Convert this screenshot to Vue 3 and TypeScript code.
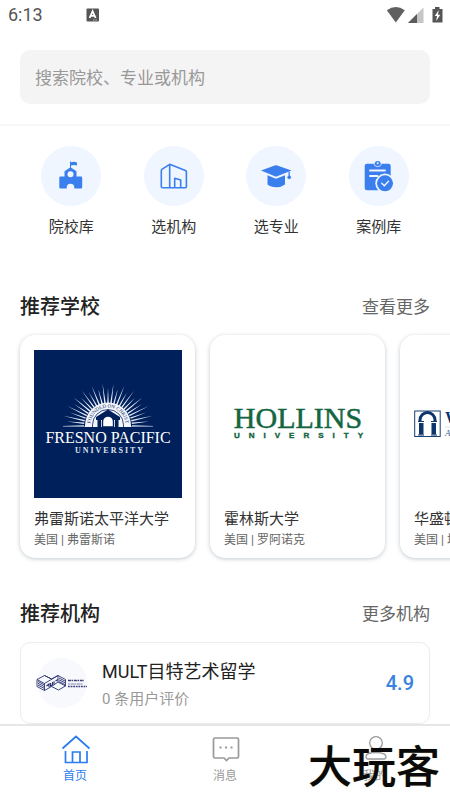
<script setup lang="ts">
import { ref } from 'vue'

interface Shortcut {
  icon: 'school' | 'agency' | 'major' | 'case'
  label: string
}

interface School {
  logo: 'fresno' | 'hollins' | 'washington'
  name: string
  place: string
}

interface Tab {
  id: 'home' | 'message' | 'mine'
  label: string
}

const keyword = ref('')
const activeTab = ref<Tab['id']>('home')

const shortcuts: Shortcut[] = [
  { icon: 'school', label: '院校库' },
  { icon: 'agency', label: '选机构' },
  { icon: 'major', label: '选专业' },
  { icon: 'case', label: '案例库' },
]

const schools: School[] = [
  { logo: 'fresno', name: '弗雷斯诺太平洋大学', place: '美国 | 弗雷斯诺' },
  { logo: 'hollins', name: '霍林斯大学', place: '美国 | 罗阿诺克' },
  { logo: 'washington', name: '华盛顿复临大学', place: '美国 | 塔科马' },
]

const tabs: Tab[] = [
  { id: 'home', label: '首页' },
  { id: 'message', label: '消息' },
  { id: 'mine', label: '我的' },
]

// Sunburst around the Fresno arch: alternating long and short rays.
const rays = Array.from({ length: 27 }, (_, i) => {
  const angle = Math.PI + (Math.PI * i) / 26
  const half = 0.034
  const outer = i % 2 === 0 ? 46 : 41
  const at = (r: number, a: number) =>
    `${(74 + r * Math.cos(a)).toFixed(1)},${(76 + r * 0.93 * Math.sin(a)).toFixed(1)}`
  return `${at(24, angle - half)} ${at(outer, angle)} ${at(24, angle + half)}`
})
</script>

<template>
  <div class="app">
    <header class="status">
      <span class="clock">6:13</span>
      <svg class="ime" viewBox="0 0 14 14" aria-hidden="true">
        <rect x="0.5" y="0.5" width="12.5" height="13" rx="1" fill="#555" />
        <path d="M3.6 10 6.6 3.2 9.6 10M4.8 7.8h3.6" fill="none" stroke="#fff" stroke-width="1.8" />
        <path d="M7 12h4" stroke="#ddd" stroke-width="0.8" stroke-dasharray="1 .6" />
      </svg>
      <svg class="signals" viewBox="0 0 58 18" aria-hidden="true">
        <path d="M0.8 4.2Q9.8-2.2 18.8 4.2L9.8 16.5Z" fill="#606060" />
        <path d="M22 17 37.500 1.500V17Z" fill="#c6c6c6" />
        <path d="M22 17 31 8V17Z" fill="#5b5b5b" />
        <path d="M46.500 3h2.500V1h4.500v2H56.500V16.500H46.500Z" fill="#555" />
        <path d="M52.800 4 48.800 10h2.200L50.200 15 54.300 8.800h-2.400Z" fill="#fff" />
      </svg>
    </header>

    <main class="content">
      <form class="search" role="search" @submit.prevent>
        <input v-model="keyword" type="search" aria-label="搜索" placeholder="搜索院校、专业或机构" />
      </form>

      <nav class="shortcuts">
        <a v-for="item in shortcuts" :key="item.icon" class="shortcut" href="#">
          <svg class="shortcut-icon" viewBox="0 0 60 60" aria-hidden="true">
            <g v-if="item.icon === 'school'" fill="#3b7fee">
              <path d="M29 15.500H30V16.200Q33 15.300 36 16.500V19.600Q33 18.500 30 19.600V22.300H29Z" />
              <path
                fill-rule="evenodd"
                d="M29.500 21.300 35.500 25.200V30.500H40Q41.200 30.500 41.200 31.700V41.300Q41.200 42.500 40 42.500H33.300V41.500A3.800 3.800 0 0 0 25.700 41.500V42.500H19.500Q18.300 42.500 18.300 41.300V31.700Q18.300 30.500 19.500 30.500H23.500V25.200ZM29.500 25.300A3 3 0 1 0 29.500 31.300A3 3 0 1 0 29.500 25.300Z"
              />
            </g>
            <g v-else-if="item.icon === 'agency'" fill="none" stroke="#3b7fee" stroke-width="1.600" stroke-linejoin="round">
              <path d="M25.700 18.300 18.200 23.200Q17.300 23.900 17.300 25V40.500Q17.300 41.700 18.500 41.700H41.200Q42.400 41.700 42.400 40.500V26Q42.400 24.900 41.400 24.500Z" />
              <path d="M25.700 18.300V41.700M30.700 41.700V32.300L36.700 34V41.700" />
            </g>
            <g v-else-if="item.icon === 'major'" fill="#3b7fee">
              <path d="M15 24.600 28.800 19.400Q30 19 31.200 19.400L45.500 24.600 31.200 30.300Q30 30.800 28.800 30.300Z" />
              <path d="M21.500 29.300 28.600 32.200Q30 32.800 31.400 32.200L39 29.200V38.500Q35.500 41.300 30.200 41.300T21.500 38.500Z" />
              <path d="M42.500 25.500H43.800V29.500Q45.500 30.500 45.200 32L43.200 33.200 41.200 32Q41 30.500 42.500 29.500Z" />
            </g>
            <g v-else>
              <rect x="15.700" y="17.700" width="26" height="26.500" rx="2.200" fill="#3b7fee" />
              <circle cx="28.700" cy="18" r="3" fill="#3b7fee" />
              <path d="M24.500 17.300Q25.500 20.700 28.700 20.700T32.900 17.300" fill="none" stroke="#eff6ff" stroke-width="0.800" />
              <circle cx="28.700" cy="17.200" r="1" fill="#eff6ff" />
              <path d="M21 24.500H36M21 30H28.500" stroke="#eff6ff" stroke-width="1.900" stroke-linecap="round" />
              <circle cx="36" cy="37.300" r="9.700" fill="#eff6ff" />
              <circle cx="36" cy="37.300" r="8" fill="#3b7fee" />
              <path d="M32.800 37.300 35.300 39.700 39.500 35.200" fill="none" stroke="#eff6ff" stroke-width="1.400" stroke-linecap="round" />
            </g>
          </svg>
          <span>{{ item.label }}</span>
        </a>
      </nav>

      <section class="section">
        <div class="section-head">
          <h2>推荐学校</h2>
          <a href="#">查看更多</a>
        </div>
        <div class="schools">
          <a v-for="school in schools" :key="school.logo" class="school" href="#">
            <svg v-if="school.logo === 'fresno'" class="school-logo" viewBox="0 0 148 148" role="img" aria-label="Fresno Pacific University">
              <rect width="148" height="148" fill="#00205b" />
              <polygon v-for="points in rays" :key="points" :points="points" fill="#e7edf8" />
              <path d="M29 76.500H119" stroke="#8295ba" stroke-width="0.800" />
              <path d="M51 77V75.500A23 23 0 0 1 97 75.500V77Z" fill="#f4f6fb" />
              <path d="M58.500 77V75A15.500 15.500 0 0 1 89.500 75V77" fill="none" stroke="#00205b" stroke-width="0.800" />
              <path id="fresno-arc" d="M56.500 77V75A17.500 17.500 0 0 1 91.500 75V77" fill="none" />
              <text class="fresno-motto"><textPath href="#fresno-arc" startOffset="50%">FOUNDED ON CHRIST</textPath></text>
              <path d="M62 67 74 59.500 86 67V70H62ZM63.500 70H67V77H63.500ZM81 70H84.500V77H81Z" fill="#00205b" />
              <path d="M68.500 77V71.500A5.500 5.500 0 0 1 79.500 71.500V77Z" fill="#fff" stroke="#00205b" stroke-width="1.400" />
              <text class="fresno-name" x="74" y="93">FRESNO PACIFIC</text>
              <text class="fresno-sub" x="76" y="103">UNIVERSITY</text>
            </svg>
            <svg v-else-if="school.logo === 'hollins'" class="school-logo" viewBox="0 0 148 148" role="img" aria-label="Hollins University">
              <text class="hollins-name" x="74" y="78">HOLLINS</text>
              <text class="hollins-sub" x="79" y="88">UNIVERSITY</text>
            </svg>
            <svg v-else class="school-logo" viewBox="0 0 148 148" role="img" aria-label="Washington Adventist University">
              <rect x="0.700" y="61" width="25.500" height="25.500" fill="#fff" stroke="#173e73" stroke-width="1" />
              <path d="M6 71.500V70A7.500 7.500 0 0 1 21 70V71.500" fill="none" stroke="#0c356c" stroke-width="3" />
              <path d="M4 71.500H10M17 71.500H23M4 85H10M17 85H23" stroke="#0c356c" stroke-width="1.200" />
              <path d="M5 73H9.500V84.500H5ZM17.500 73H22V84.500H17.500Z" fill="#0c356c" />
              <text class="wau-name" x="31" y="73">WASHINGTON</text>
              <path d="M31 77H140" stroke="#c4cedb" stroke-width="0.600" />
              <text class="wau-sub" x="31" y="86">Adventist University</text>
            </svg>
            <strong>{{ school.name }}</strong>
            <small>{{ school.place }}</small>
          </a>
        </div>
      </section>

      <section class="section">
        <div class="section-head">
          <h2>推荐机构</h2>
          <a href="#">更多机构</a>
        </div>
        <a class="agency" href="#">
          <svg class="agency-logo" viewBox="0 0 52 50" role="img" aria-label="MULT">
            <circle cx="26" cy="25" r="25" fill="#f7f9fd" />
            <g fill="none" stroke="#29316f" stroke-width="0.900" stroke-linejoin="round">
              <path d="M1 21.500 8.500 17.500 15.500 21 22 17.500 29.500 21.500V28L22.500 32 15.500 28.500 8.500 32.500 1 28.500Z" />
              <path d="M1 21.500 8.500 25.500 22 17.500M8.500 25.500V32.500M22 17.500V24L29.500 28M15.500 28.500 22 24M15.500 21 8.500 17.500" />
              <path d="M2 23.500 8 26.700M2 25.300 8 28.500M2 27.100 8 30.300M23 20 29 23M23 21.800 29 24.800M23 23.600 29 26.600" />
            </g>
            <path d="M10.500 28 13 26V29M14.500 25V28L16.500 26.800V24M18 23.300V26.500M19.500 23 22 21.500" fill="none" stroke="#29316f" stroke-width="1.100" />
            <path d="M32 22.500H48" stroke="#39417c" stroke-width="1.700" stroke-dasharray="3 .6 1.500 .8" />
            <path d="M32 26H47" stroke="#737aa3" stroke-width="1.200" stroke-dasharray="2 .7 3 .5" />
            <path d="M32 28.500H51" stroke="#39417c" stroke-width="1.300" stroke-dasharray="1.800 .8" />
          </svg>
          <span class="agency-text">
            <strong>MULT目特艺术留学</strong>
            <small>0 条用户评价</small>
          </span>
          <span class="score">4.9</span>
        </a>
      </section>
    </main>

    <footer class="tabbar">
      <button
        v-for="tab in tabs"
        :key="tab.id"
        type="button"
        class="tab"
        :class="{ active: tab.id === activeTab }"
        @click="activeTab = tab.id"
      >
        <svg viewBox="0 0 30 30" fill="none" stroke="currentColor" stroke-width="1.700" aria-hidden="true">
          <g v-if="tab.id === 'home'">
            <path d="M2.500 14.500 16 2.500 29.500 14.500" />
            <path d="M5.500 17V28.500H27V17M12.500 28.500V18H20V28.500" />
          </g>
          <g v-else-if="tab.id === 'message'">
            <path d="M5 4H27Q28.500 4 28.500 5.500V22.500Q28.500 24 27 24H19L16.500 26.500 14 24H5Q3.500 24 3.500 22.500V5.500Q3.500 4 5 4Z" />
            <path d="M9.500 13.500H11.500M15 13.500H17M20.500 13.500H22.500" stroke-width="2" />
          </g>
          <g v-else stroke-width="1.300">
            <circle cx="16" cy="9" r="6.300" />
            <path d="M16 18.500C24 18.500 26 21 26 22.500Q26 25 24 25H8Q6 25 6 22.500C6 21 8 18.500 16 18.500Z" />
          </g>
        </svg>
        <span>{{ tab.label }}</span>
      </button>
      <span class="watermark">大玩客</span>
    </footer>
  </div>
</template>

<style>
body {
  margin: 0;
  background: #fff;
}
</style>

<style scoped>
.app {
  display: flex;
  flex-direction: column;
  height: 100vh;
  overflow: hidden;
  color: #333;
  font-family: Roboto, 'Noto Sans CJK SC', sans-serif;
}

.app * {
  box-sizing: border-box;
}

a {
  color: inherit;
  text-decoration: none;
}

.status {
  display: flex;
  flex: none;
  align-items: center;
  height: 30px;
  padding: 0 6px 0 8px;
}

.clock {
  width: 78px;
  color: #555;
  font-size: 18px;
  line-height: 30px;
}

.ime {
  width: 14px;
  height: 14px;
}

.signals {
  width: 58px;
  height: 18px;
  margin-left: auto;
}

.content {
  flex: 1;
  min-height: 0;
  overflow-y: auto;
  scrollbar-width: none;
}

.search {
  padding: 20px;
  border-bottom: 2px solid #f5f7f9;
}

.search input {
  display: block;
  width: 100%;
  height: 54px;
  padding: 2px 15px 0;
  border: 0;
  border-radius: 10px;
  outline: 0;
  background: #f4f4f4;
  color: #333;
  font-family: inherit;
  font-size: 17px;
  appearance: none;
}

.search input::placeholder {
  color: #999;
  opacity: 1;
}

.shortcuts {
  display: grid;
  grid-template-columns: repeat(4, 1fr);
  padding: 20px 20px 0;
}

.shortcut {
  display: flex;
  flex-direction: column;
  align-items: center;
  gap: 10px;
  font-size: 15px;
  line-height: 22px;
}

.shortcut-icon {
  width: 60px;
  height: 60px;
  border-radius: 50%;
  background: #eff6ff;
}

.section {
  padding: 0 20px;
}

.shortcuts + .section {
  padding-top: 54px;
}

.schools {
  display: flex;
  gap: 15px;
  margin: 0 -20px;
  padding: 13px 20px 41px;
  overflow-x: auto;
  scrollbar-width: none;
}

.section-head {
  display: flex;
  align-items: center;
  justify-content: space-between;
  line-height: 30px;
}

.section-head h2 {
  margin: 0;
  color: #222;
  font-size: 20px;
  font-weight: 500;
}

.section-head a {
  color: #666;
  font-size: 17px;
}

.school {
  display: flex;
  flex: none;
  flex-direction: column;
  width: 175px;
  padding: 15px 13px 8px 14px;
  border-radius: 15px;
  background: #fff;
  box-shadow: 0 1px 4px rgba(40, 60, 80, 0.28);
}

.school-logo {
  width: 148px;
  height: 148px;
}

.school strong {
  margin-top: 10px;
  overflow: hidden;
  font-size: 15px;
  font-weight: 400;
  line-height: 22px;
  white-space: nowrap;
}

.school small {
  color: #666;
  font-size: 12px;
  line-height: 20px;
}

.fresno-name {
  fill: #fff;
  font: 16px 'Liberation Serif', serif;
  text-anchor: middle;
}

.fresno-sub {
  fill: #dce3f0;
  font: bold 8px 'Liberation Serif', serif;
  letter-spacing: 2px;
  text-anchor: middle;
}

.fresno-motto {
  fill: #00205b;
  font: 5px 'Liberation Serif', serif;
  text-anchor: middle;
}

.hollins-name {
  fill: #13663f;
  stroke: #13663f;
  stroke-width: 0.5px;
  font: 30px 'Liberation Serif', serif;
  text-anchor: middle;
}

.hollins-sub {
  fill: #13663f;
  stroke: #13663f;
  stroke-width: 0.4px;
  font: bold 8px 'Liberation Sans', sans-serif;
  letter-spacing: 9px;
  text-anchor: middle;
}

.wau-name {
  fill: #0c356c;
  font: bold 16px 'Liberation Serif', serif;
}

.wau-sub {
  fill: #45618a;
  font: italic 9px 'Liberation Serif', serif;
}

.agency {
  display: flex;
  align-items: center;
  height: 82px;
  margin-top: 13px;
  padding: 0 15px;
  border: 1px solid #ececec;
  border-radius: 10px;
}

.agency-logo {
  width: 52px;
  height: 50px;
}

.agency-text {
  display: flex;
  flex: 1;
  flex-direction: column;
  padding: 4px 0 0 14px;
}

.agency-text strong {
  color: #222;
  font-size: 18px;
  font-weight: 400;
  line-height: 28px;
}

.agency-text small {
  color: #999;
  font-size: 15px;
  line-height: 26px;
}

.score {
  color: #3a82dc;
  font-size: 20px;
  font-weight: 500;
}

.tabbar {
  position: relative;
  display: grid;
  flex: none;
  grid-template-columns: repeat(3, 1fr);
  height: 76px;
  border-top: 2px solid #e6e6e6;
  background: #fff;
}

.tab {
  display: flex;
  flex-direction: column;
  align-items: center;
  gap: 2px;
  padding: 8px 0 0;
  border: 0;
  background: none;
  color: #999;
  font-family: inherit;
  font-size: 12px;
  line-height: 20px;
}

.tab.active {
  color: #2b7cf0;
}

.tab svg {
  width: 30px;
  height: 30px;
}

.watermark {
  position: absolute;
  right: 10px;
  bottom: 10px;
  color: #0a0a0a;
  font-size: 44px;
  font-weight: 500;
  line-height: 44px;
  pointer-events: none;
  text-shadow: 0 0 1px #b8b080;
}
</style>
